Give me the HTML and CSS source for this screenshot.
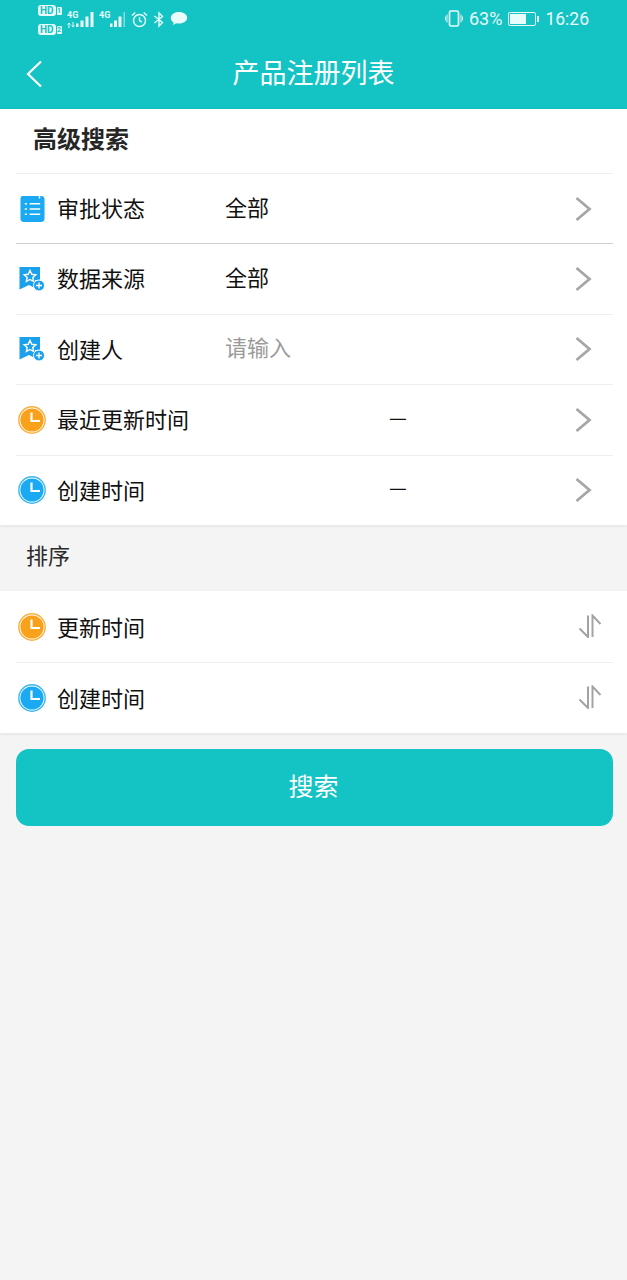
FILE: index.html
```html
<!DOCTYPE html>
<html lang="zh-CN">
<head>
    <meta charset="UTF-8">
    <meta name="viewport" content="width=device-width, initial-scale=1.0">
    <title>产品注册列表</title>
    <link rel="stylesheet" href="styles.css">
</head>
<body>

<svg class="icon-defs" width="0" height="0">
    <defs>
        <symbol id="chevron" viewBox="0 0 18 26">
            <path d="M2.5 2 L15.5 13 L2.5 24" fill="none" stroke="#a6a6a6" stroke-width="2.8"/>
        </symbol>
        <symbol id="sort" viewBox="0 0 24 24">
            <path d="M10 1.5 V23 L1.5 14.5" fill="none" stroke="#a3a3a3" stroke-width="2"/>
            <path d="M14.5 23 V1.5 L22.5 10" fill="none" stroke="#a3a3a3" stroke-width="2"/>
        </symbol>
        <symbol id="list" viewBox="0 0 26 28">
            <path d="M3 0.5 H19.5 V3 H21 V0.5 H22 Q25.5 0.5 25.5 4 V24 Q25.5 27.5 22 27.5 H4 Q0.5 27.5 0.5 24 V3 Q0.5 0.5 3 0.5 Z" fill="#1aa9f2"/>
            <path d="M10 8.5 H21 M10 14 H21 M10 19.5 H21 M5 8.5 H7.2 M5 14 H7.2 M5 19.5 H7.2" fill="none" stroke="#fff" stroke-width="1.7"/>
        </symbol>
        <symbol id="star" viewBox="0 0 26 26">
            <path d="M0.5 1 H21 V14 H16 V22 L10 19 L0.5 23.5 Z" fill="#1aa0ec"/>
            <path d="M11 4.5 L12.8 8.3 L16.8 8.8 L13.8 11.5 L14.6 15.5 L11 13.5 L7.4 15.5 L8.2 11.5 L5.2 8.8 L9.2 8.3 Z" fill="none" stroke="#fff" stroke-width="1.4"/>
            <circle cx="20" cy="19.5" r="5.5" fill="#1aa0ec" stroke="#fff" stroke-width="1"/>
            <path d="M17 19.5 H23 M20 16.5 V22.5" stroke="#fff" stroke-width="1.3"/>
        </symbol>
        <symbol id="clock" viewBox="0 0 28 28">
            <circle cx="14" cy="14" r="13.2" fill="none" stroke="currentColor" stroke-width="1.4" opacity="0.85"/>
            <circle cx="14" cy="14" r="11.6" fill="currentColor"/>
            <path d="M13.5 6.5 V15 H22" fill="none" stroke="#fff" stroke-width="2.2"/>
        </symbol>
    </defs>
</svg>

<div class="app-header">
    <div class="status-bar">
        <div class="status-left">
            <div class="hd-stack">
                <div class="hd"><span class="hd-box">HD</span><span class="hd-num">1</span></div>
                <div class="hd"><span class="hd-box">HD</span><span class="hd-num">2</span></div>
            </div>
            <div class="net-col">
                <span class="net">4G</span>
                <svg width="9" height="6" viewBox="0 0 9 6">
                    <path d="M2 6V1M0.500 2.500L2 1l1.500 1.500M6 0v5M4.500 3.500L6 5l1.500-1.500" fill="none" stroke="#e9fbfb" stroke-width="1"/>
                </svg>
            </div>
            <svg class="bars" width="18" height="16" viewBox="0 0 18 16">
                <path d="M0 12.500h2.500V16H0zM4.500 9.500H7.500V16H4.500zM9.500 5.500H12.500V16H9.500zM14.500 1H17.500v15h-3z" fill="#e9fbfb"/>
            </svg>
            <span class="net net-second">4G</span>
            <svg class="bars bars-second" width="17" height="16" viewBox="0 0 17 16">
                <path d="M1 12.500h2.500V16H1zM5 9.500H8V16H5zM9.500 5.500H12.500V16H9.500z" fill="#e9fbfb"/>
                <path d="M14.500 1H16v15h-1.500z" fill="#7fdfdf"/>
            </svg>
            <svg class="st-icon st-alarm" width="17" height="17" viewBox="0 0 17 17">
                <circle cx="8.500" cy="9.500" r="6" fill="none" stroke="#e9fbfb" stroke-width="1.500"/>
                <path d="M8.500 6v3.700l2.300 1.500M1 4.500l3.300-3M16 4.500l-3.300-3" fill="none" stroke="#e9fbfb" stroke-width="1.400"/>
            </svg>
            <svg class="st-icon st-bt" width="12" height="17" viewBox="0 0 12 16">
                <path d="M1.500 4.500l8 6.500-3.500 3.500V1.500L9.500 5l-8 6.500" fill="none" stroke="#e9fbfb" stroke-width="1.400"/>
            </svg>
            <svg class="st-icon st-msg" width="18" height="15" viewBox="0 0 18 15">
                <path d="M9 1C4.300 1 .8 3.600.8 7c0 1.900 1.100 3.500 2.900 4.600L3 14l3.300-1.700c.9.200 1.800.3 2.700.3 4.600 0 8.200-2.500 8.200-5.800S13.600 1 9 1z" fill="#e9fbfb"/>
            </svg>
        </div>
        <div class="status-right">
            <svg class="st-icon st-vibrate" width="18" height="17" viewBox="0 0 18 17">
                <rect x="4.500" y="1" width="9" height="15" rx="1.500" fill="none" stroke="#e9fbfb" stroke-width="1.700"/>
                <path d="M2 4.500v8M.5 6.500v4M16 4.500v8M17.500 6.500v4" stroke="#e9fbfb" stroke-width="1"/>
            </svg>
            <span class="pct">63%</span>
            <div class="battery"><div class="battery-fill"></div></div>
            <div class="battery-tip"></div>
            <span class="clock-time">16:26</span>
        </div>
    </div>
    <div class="nav-bar">
        <button class="back" aria-label="返回">
            <svg width="18" height="28" viewBox="0 0 18 28">
                <path d="M16 1.500 L3 14 L16 26.500" fill="none" stroke="#fff" stroke-width="2.200"/>
            </svg>
        </button>
        <h1>产品注册列表</h1>
    </div>
</div>

<div class="panel panel-search">
    <div class="panel-title">高级搜索</div>
    <div class="row row-first">
        <span class="icon-slot"><svg class="icon-list"><use href="#list"/></svg></span>
        <span class="label">审批状态</span>
        <span class="value">全部</span>
        <svg class="chev"><use href="#chevron"/></svg>
    </div>
    <div class="row row-dark">
        <span class="icon-slot"><svg class="icon-star"><use href="#star"/></svg></span>
        <span class="label">数据来源</span>
        <span class="value">全部</span>
        <svg class="chev"><use href="#chevron"/></svg>
    </div>
    <div class="row">
        <span class="icon-slot"><svg class="icon-star"><use href="#star"/></svg></span>
        <span class="label">创建人</span>
        <span class="value placeholder">请输入</span>
        <svg class="chev"><use href="#chevron"/></svg>
    </div>
    <div class="row">
        <span class="icon-slot"><svg class="icon-clock clock-orange"><use href="#clock"/></svg></span>
        <span class="label">最近更新时间</span>
        <span class="value dash">—</span>
        <svg class="chev"><use href="#chevron"/></svg>
    </div>
    <div class="row">
        <span class="icon-slot"><svg class="icon-clock clock-blue"><use href="#clock"/></svg></span>
        <span class="label">创建时间</span>
        <span class="value dash">—</span>
        <svg class="chev"><use href="#chevron"/></svg>
    </div>
</div>

<div class="section-label">排序</div>

<div class="panel panel-sort">
    <div class="row row-first">
        <span class="icon-slot"><svg class="icon-clock clock-orange"><use href="#clock"/></svg></span>
        <span class="label">更新时间</span>
        <svg class="sort"><use href="#sort"/></svg>
    </div>
    <div class="row">
        <span class="icon-slot"><svg class="icon-clock clock-blue"><use href="#clock"/></svg></span>
        <span class="label">创建时间</span>
        <svg class="sort"><use href="#sort"/></svg>
    </div>
</div>

<button class="search-btn">搜索</button>

</body>
</html>
```

FILE: styles.css
```css
* {
    box-sizing: border-box;
}
body {
    margin: 0;
    min-height: 1280px;
    background: #f4f4f5;
    color: #1a1a1a;
    font-family: "Noto Sans CJK SC", "Noto Sans", sans-serif;
}
.icon-defs {
    position: absolute;
}
.app-header {
    height: 109px;
    background: #14c3c4;
    color: #fff;
}
.status-bar {
    height: 38px;
    display: flex;
    justify-content: space-between;
    padding: 5px 38px 0 38px;
    color: #e9fbfb;
}
.status-left, .status-right {
    display: flex;
    align-items: flex-start;
}
.hd-stack {
    width: 29px;
    display: flex;
    flex-direction: column;
    gap: 8px;
}
.hd {
    display: flex;
    align-items: center;
    gap: 1px;
    height: 11px;
}
.hd-box {
    background: #e9fbfb;
    color: #14c3c4;
    border-radius: 3px;
    font: bold 10px/11px "Roboto", sans-serif;
    padding: 0 2px;
}
.hd-num {
    font: bold 7px/8px "Roboto", sans-serif;
    background: #e9fbfb;
    color: #14c3c4;
    border-radius: 1px;
    width: 5px;
    text-align: center;
}
.net-col {
    width: 9px;
    margin-top: 6px;
    display: flex;
    flex-direction: column;
    gap: 2px;
    line-height: 0;
}
.net {
    font: bold 9px/9px "Roboto", sans-serif;
}
.net-second {
    width: 10px;
    margin: 6px 0 0 5px;
}
.bars {
    margin: 6px 0 0 0;
}
.st-icon {
    margin-top: 6px;
}
.st-alarm {
    margin-left: 5px;
}
.st-bt {
    margin-left: 5px;
}
.st-msg {
    margin-left: 5px;
}
.st-vibrate {
    margin-top: 5px;
}
.pct {
    font: 18px/20px "Roboto", sans-serif;
    margin: 4px 6px 0 6px;
}
.battery {
    width: 28px;
    height: 14px;
    margin-top: 7px;
    border: 1px solid #e9fbfb;
    border-radius: 2px;
    padding: 1px;
}
.battery-fill {
    width: 63%;
    height: 100%;
    background: #e9fbfb;
}
.battery-tip {
    width: 2px;
    height: 6px;
    margin: 11px 6px 0 1px;
    background: #e9fbfb;
}
.clock-time {
    font: 17.5px/20px "Roboto", sans-serif;
    margin-top: 4px;
}
.nav-bar {
    position: relative;
    height: 71px;
    display: flex;
    align-items: center;
    justify-content: center;
}
.nav-bar h1 {
    margin: 0 0 4px;
    font-size: 27px;
    font-weight: 400;
    line-height: 36px;
}
.back {
    position: absolute;
    left: 25px;
    top: 22px;
    padding: 0;
    border: none;
    background: none;
    line-height: 0;
}
.panel {
    background: #fff;
    box-shadow: 0 1px 4px rgba(0, 0, 0, 0.08);
}
.panel-search {
    height: 416px;
}
.panel-sort {
    height: 142px;
}
.panel-title {
    height: 64px;
    padding-left: 33px;
    font-size: 24px;
    font-weight: 700;
    line-height: 58px;
    color: #262626;
}
.row {
    height: 70.5px;
    margin: 0 14px 0 16px;
    border-top: 1px solid #efefef;
    display: flex;
    align-items: center;
    color: #111;
}
.panel-search .row-first {
    height: 70px;
}
.panel-sort .row-first {
    border-top: none;
}
.row-dark {
    border-top-color: #cfcfcf;
}
.icon-slot {
    flex: none;
    width: 41px;
    height: 28px;
    padding-left: 2px;
    display: flex;
    align-items: center;
}
.panel-sort .icon-slot {
    margin-top: 1px;
}
.icon-list {
    width: 25px;
    height: 28px;
    margin-left: 2px;
}
.icon-star {
    width: 26px;
    height: 26px;
    margin-left: 1px;
}
.icon-clock {
    width: 28px;
    height: 28px;
}
.clock-orange {
    color: #f9a11b;
}
.clock-blue {
    color: #1aa9f2;
}
.label {
    width: 168px;
    flex: none;
    font-size: 22px;
    line-height: 30px;
    margin-bottom: 3px;
}
.panel-sort .label {
    margin-bottom: 1px;
}
.value {
    flex: 1;
    font-size: 22px;
    line-height: 30px;
    margin-bottom: 6px;
}
.placeholder {
    color: #9a9a9a;
}
.dash {
    padding-left: 164px;
    font-size: 20px;
}
.chev {
    flex: none;
    width: 18px;
    height: 26px;
    margin: 0 21px 0 0;
}
.sort {
    flex: none;
    width: 24px;
    height: 24px;
    margin-left: auto;
    margin-right: 11px;
}
.section-label {
    height: 66px;
    padding-left: 26px;
    font-size: 22px;
    line-height: 59px;
    color: #2b2b2b;
}
.search-btn {
    display: block;
    width: 597px;
    height: 77px;
    margin: 16px 0 0 16px;
    padding: 0 2px 6px 0;
    border: none;
    border-radius: 13px;
    background: #14c3c4;
    color: #fff;
    font-family: inherit;
    font-size: 25px;
}
```
